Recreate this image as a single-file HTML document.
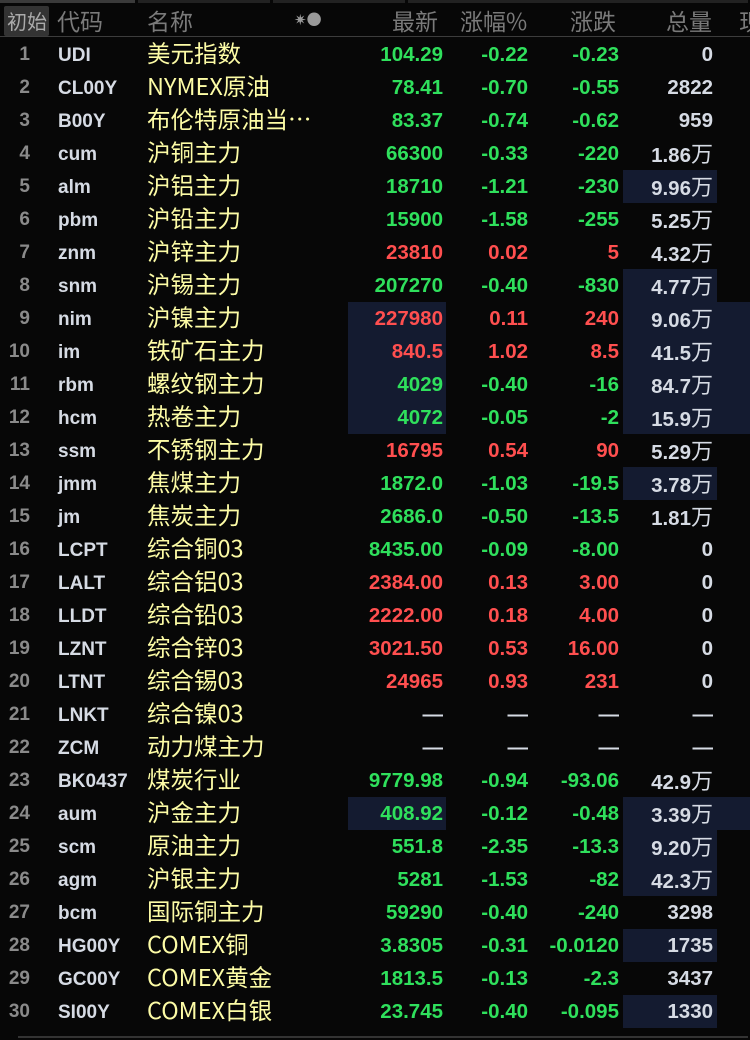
<!DOCTYPE html>
<html><head><meta charset="utf-8"><style>
*{margin:0;padding:0;box-sizing:border-box}
body{width:750px;height:1040px;background:#070707;overflow:hidden;position:relative;font-family:"Liberation Sans","Noto Sans CJK SC",sans-serif}
.top{position:absolute;top:0;height:3px;background:#3a3a3a}
.hd{position:absolute;top:4px;font-size:23px;color:#7a7a7a;line-height:32px;font-family:"Noto Sans CJK SC",sans-serif}
.hl{position:absolute;left:0;top:36px;width:750px;height:1px;background:#3c3c3c}
.r{position:absolute;left:0;width:750px;height:33px;line-height:33px}
.r span{position:absolute;top:0;white-space:nowrap}
.i{right:720px;color:#8a8a8a;font-size:19px;font-weight:bold}
.c{left:58px;color:#d6dbe4;font-size:19px;font-weight:bold;top:1px!important}
.r span.n{left:147px;color:#fdfca6;font-size:23.5px;font-family:"Noto Sans CJK SC",sans-serif;top:-2px}
.p{right:307px;font-size:20.5px;font-weight:bold}
.z{right:222px;font-size:20.5px;font-weight:bold}
.d{right:131px;font-size:20.5px;font-weight:bold}
.v{right:37px;color:#d6dbe4;font-size:20.5px;font-weight:bold}
.v b{font-weight:normal;font-size:22px;font-family:"Noto Sans CJK SC",sans-serif}
.g{color:#2fe05c}.red{color:#ff4f4f}.w{color:#d6dbe4}
.bx{position:absolute;background:#141b30}
</style></head><body>
<div class="top" style="left:0;width:135px"></div>
<div class="top" style="left:138px;width:132px;background:#222"></div>
<div class="top" style="left:273px;width:132px;background:#222"></div>
<div class="top" style="left:408px;width:340px;background:#222"></div>
<div style="position:absolute;left:4px;top:6px;width:45px;height:30px;background:#333;border-radius:2px"></div>
<div class="hd" style="left:7px;color:#aaa;font-size:20px;top:5px">初始</div>
<div class="hd" style="left:57px">代码</div>
<div class="hd" style="left:147px">名称</div>
<div class="hd" style="left:294px;font-size:15px;color:#999">✷●</div>
<div class="hd" style="left:392px">最新</div>
<div class="hd" style="left:460px">涨幅%</div>
<div class="hd" style="left:570px">涨跌</div>
<div class="hd" style="left:666px">总量</div>
<div class="hd" style="left:739px">现</div>
<div class="hl"></div>
<div class="bx" style="left:623px;top:170px;width:94px;height:33px"></div>
<div class="bx" style="left:623px;top:269px;width:94px;height:33px"></div>
<div class="bx" style="left:348px;top:302px;width:98px;height:132px"></div>
<div class="bx" style="left:623px;top:302px;width:127px;height:132px"></div>
<div class="bx" style="left:623px;top:467px;width:94px;height:33px"></div>
<div class="bx" style="left:348px;top:797px;width:98px;height:33px"></div>
<div class="bx" style="left:623px;top:797px;width:127px;height:33px"></div>
<div class="bx" style="left:623px;top:830px;width:94px;height:66px"></div>
<div class="bx" style="left:623px;top:929px;width:94px;height:33px"></div>
<div class="bx" style="left:623px;top:995px;width:94px;height:33px"></div>
<div style="position:absolute;left:18px;top:1036px;width:730px;height:2px;background:#333"></div>
<div class="r" style="top:38px"><span class="i">1</span><span class="c">UDI</span><span class="n">美元指数</span><span class="p g">104.29</span><span class="z g">-0.22</span><span class="d g">-0.23</span><span class="v">0</span></div>
<div class="r" style="top:71px"><span class="i">2</span><span class="c">CL00Y</span><span class="n">NYMEX原油</span><span class="p g">78.41</span><span class="z g">-0.70</span><span class="d g">-0.55</span><span class="v">2822</span></div>
<div class="r" style="top:104px"><span class="i">3</span><span class="c">B00Y</span><span class="n">布伦特原油当…</span><span class="p g">83.37</span><span class="z g">-0.74</span><span class="d g">-0.62</span><span class="v">959</span></div>
<div class="r" style="top:137px"><span class="i">4</span><span class="c">cum</span><span class="n">沪铜主力</span><span class="p g">66300</span><span class="z g">-0.33</span><span class="d g">-220</span><span class="v">1.86<b>万</b></span></div>
<div class="r" style="top:170px"><span class="i">5</span><span class="c">alm</span><span class="n">沪铝主力</span><span class="p g">18710</span><span class="z g">-1.21</span><span class="d g">-230</span><span class="v">9.96<b>万</b></span></div>
<div class="r" style="top:203px"><span class="i">6</span><span class="c">pbm</span><span class="n">沪铅主力</span><span class="p g">15900</span><span class="z g">-1.58</span><span class="d g">-255</span><span class="v">5.25<b>万</b></span></div>
<div class="r" style="top:236px"><span class="i">7</span><span class="c">znm</span><span class="n">沪锌主力</span><span class="p red">23810</span><span class="z red">0.02</span><span class="d red">5</span><span class="v">4.32<b>万</b></span></div>
<div class="r" style="top:269px"><span class="i">8</span><span class="c">snm</span><span class="n">沪锡主力</span><span class="p g">207270</span><span class="z g">-0.40</span><span class="d g">-830</span><span class="v">4.77<b>万</b></span></div>
<div class="r" style="top:302px"><span class="i">9</span><span class="c">nim</span><span class="n">沪镍主力</span><span class="p red">227980</span><span class="z red">0.11</span><span class="d red">240</span><span class="v">9.06<b>万</b></span></div>
<div class="r" style="top:335px"><span class="i">10</span><span class="c">im</span><span class="n">铁矿石主力</span><span class="p red">840.5</span><span class="z red">1.02</span><span class="d red">8.5</span><span class="v">41.5<b>万</b></span></div>
<div class="r" style="top:368px"><span class="i">11</span><span class="c">rbm</span><span class="n">螺纹钢主力</span><span class="p g">4029</span><span class="z g">-0.40</span><span class="d g">-16</span><span class="v">84.7<b>万</b></span></div>
<div class="r" style="top:401px"><span class="i">12</span><span class="c">hcm</span><span class="n">热卷主力</span><span class="p g">4072</span><span class="z g">-0.05</span><span class="d g">-2</span><span class="v">15.9<b>万</b></span></div>
<div class="r" style="top:434px"><span class="i">13</span><span class="c">ssm</span><span class="n">不锈钢主力</span><span class="p red">16795</span><span class="z red">0.54</span><span class="d red">90</span><span class="v">5.29<b>万</b></span></div>
<div class="r" style="top:467px"><span class="i">14</span><span class="c">jmm</span><span class="n">焦煤主力</span><span class="p g">1872.0</span><span class="z g">-1.03</span><span class="d g">-19.5</span><span class="v">3.78<b>万</b></span></div>
<div class="r" style="top:500px"><span class="i">15</span><span class="c">jm</span><span class="n">焦炭主力</span><span class="p g">2686.0</span><span class="z g">-0.50</span><span class="d g">-13.5</span><span class="v">1.81<b>万</b></span></div>
<div class="r" style="top:533px"><span class="i">16</span><span class="c">LCPT</span><span class="n">综合铜03</span><span class="p g">8435.00</span><span class="z g">-0.09</span><span class="d g">-8.00</span><span class="v">0</span></div>
<div class="r" style="top:566px"><span class="i">17</span><span class="c">LALT</span><span class="n">综合铝03</span><span class="p red">2384.00</span><span class="z red">0.13</span><span class="d red">3.00</span><span class="v">0</span></div>
<div class="r" style="top:599px"><span class="i">18</span><span class="c">LLDT</span><span class="n">综合铅03</span><span class="p red">2222.00</span><span class="z red">0.18</span><span class="d red">4.00</span><span class="v">0</span></div>
<div class="r" style="top:632px"><span class="i">19</span><span class="c">LZNT</span><span class="n">综合锌03</span><span class="p red">3021.50</span><span class="z red">0.53</span><span class="d red">16.00</span><span class="v">0</span></div>
<div class="r" style="top:665px"><span class="i">20</span><span class="c">LTNT</span><span class="n">综合锡03</span><span class="p red">24965</span><span class="z red">0.93</span><span class="d red">231</span><span class="v">0</span></div>
<div class="r" style="top:698px"><span class="i">21</span><span class="c">LNKT</span><span class="n">综合镍03</span><span class="p w">—</span><span class="z w">—</span><span class="d w">—</span><span class="v">—</span></div>
<div class="r" style="top:731px"><span class="i">22</span><span class="c">ZCM</span><span class="n">动力煤主力</span><span class="p w">—</span><span class="z w">—</span><span class="d w">—</span><span class="v">—</span></div>
<div class="r" style="top:764px"><span class="i">23</span><span class="c">BK0437</span><span class="n">煤炭行业</span><span class="p g">9779.98</span><span class="z g">-0.94</span><span class="d g">-93.06</span><span class="v">42.9<b>万</b></span></div>
<div class="r" style="top:797px"><span class="i">24</span><span class="c">aum</span><span class="n">沪金主力</span><span class="p g">408.92</span><span class="z g">-0.12</span><span class="d g">-0.48</span><span class="v">3.39<b>万</b></span></div>
<div class="r" style="top:830px"><span class="i">25</span><span class="c">scm</span><span class="n">原油主力</span><span class="p g">551.8</span><span class="z g">-2.35</span><span class="d g">-13.3</span><span class="v">9.20<b>万</b></span></div>
<div class="r" style="top:863px"><span class="i">26</span><span class="c">agm</span><span class="n">沪银主力</span><span class="p g">5281</span><span class="z g">-1.53</span><span class="d g">-82</span><span class="v">42.3<b>万</b></span></div>
<div class="r" style="top:896px"><span class="i">27</span><span class="c">bcm</span><span class="n">国际铜主力</span><span class="p g">59290</span><span class="z g">-0.40</span><span class="d g">-240</span><span class="v">3298</span></div>
<div class="r" style="top:929px"><span class="i">28</span><span class="c">HG00Y</span><span class="n">COMEX铜</span><span class="p g">3.8305</span><span class="z g">-0.31</span><span class="d g">-0.0120</span><span class="v">1735</span></div>
<div class="r" style="top:962px"><span class="i">29</span><span class="c">GC00Y</span><span class="n">COMEX黄金</span><span class="p g">1813.5</span><span class="z g">-0.13</span><span class="d g">-2.3</span><span class="v">3437</span></div>
<div class="r" style="top:995px"><span class="i">30</span><span class="c">SI00Y</span><span class="n">COMEX白银</span><span class="p g">23.745</span><span class="z g">-0.40</span><span class="d g">-0.095</span><span class="v">1330</span></div>
</body></html>
